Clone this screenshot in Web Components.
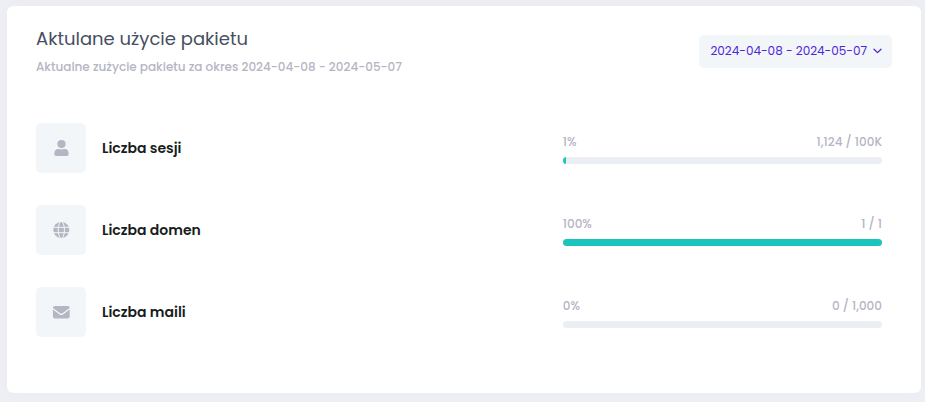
<!DOCTYPE html>
<html lang="pl">
<head>
<meta charset="utf-8">
<meta name="viewport" content="width=device-width, initial-scale=1">
<title>Aktulane użycie pakietu</title>
<style>
body { margin: 0; padding: 6px 4px 9px 7px; background: #eeeef5; font-family: Poppins, Inter, "Noto Sans", sans-serif; color: #181c20; }
</style>
</head>
<body>
<usage-card>
  <span slot="title">Aktulane użycie pakietu</span>
  <span slot="subtitle">Aktualne zużycie pakietu za okres 2024-04-08 - 2024-05-07</span>
  <period-button slot="toolbar">2024-04-08 - 2024-05-07</period-button>
  <usage-row icon="user" percent="1" amount="1,124 / 100K">Liczba sesji</usage-row>
  <usage-row icon="globe" percent="100" amount="1 / 1">Liczba domen</usage-row>
  <usage-row icon="mail" percent="0" amount="0 / 1,000">Liczba maili</usage-row>
</usage-card>
<script>
class UsageCard extends HTMLElement {
  constructor() {
    super();
    this.attachShadow({ mode: 'open' }).innerHTML = `
      <style>
        :host { display: block; box-sizing: border-box; padding: 19px 29px 56px; border-radius: 6px; background: #fff; box-shadow: 0 0 20px rgba(76, 87, 125, .02); }
        header { display: flex; align-items: center; justify-content: space-between; gap: 16px; padding-bottom: 46px; }
        h1 { margin: 0; font-size: 18px; line-height: 27px; font-weight: 400; color: #464e5f; }
        p { margin: 5px 0 0; font-size: 12px; line-height: 20px; font-weight: 500; color: #b5b5c3; }
        section { display: grid; gap: 32px; }
      </style>
      <header>
        <div><h1><slot name="title"></slot></h1><p><slot name="subtitle"></slot></p></div>
        <slot name="toolbar"></slot>
      </header>
      <section><slot></slot></section>`;
  }
}

class PeriodButton extends HTMLElement {
  constructor() {
    super();
    this.attachShadow({ mode: 'open' }).innerHTML = `
      <style>
        :host { display: block; flex: none; padding-top: 1px; }
        button { display: flex; align-items: center; gap: 6px; padding: 6px 10px 7px 11px; border: 0; border-radius: 5px; background: #f3f6f9; color: #4d26db; font: inherit; font-size: 12px; line-height: 20px; cursor: pointer; }
        svg { display: block; }
      </style>
      <button type="button" aria-haspopup="true"><slot></slot>
        <svg width="9" height="6" viewBox="0 0 9 6" fill="none" stroke="currentColor" stroke-width="1.3" stroke-linecap="round" stroke-linejoin="round" aria-hidden="true"><path d="M1 1.200 4.500 4.600 8 1.200"/></svg>
      </button>`;
  }
}

const icons = {
  user: '<circle cx="9.500" cy="5" r="4.100"/><path d="M2.300 15c0-3.500 1.500-5 4-5 1.200 0 1.700.4 3.200.4s2-.4 3.200-.4c2.500 0 4 1.500 4 5 0 1.300-.6 2-1.700 2H4c-1.100 0-1.700-.7-1.700-2z"/>',
  globe: '<circle cx="9.300" cy="9" r="8"/><g fill="none" stroke="#f3f6f9" stroke-width="1"><ellipse cx="9.300" cy="9" rx="3.100" ry="8.400"/><path d="M1 6.300h17M1 11.700h17"/></g>',
  mail: '<path d="M.9 5.100C.9 3.700 1.700 2.900 3 2.900h12.600c1.300 0 2.100.8 2.100 2.200L10.500 10.300c-.8.600-1.600.600-2.400 0z"/><path d="M.9 6.500l6.700 4.900c1.200.9 2.200.9 3.400 0l6.700-4.900v6.800c0 1.300-.8 2.100-2.100 2.100H3c-1.300 0-2.100-.8-2.100-2.100z"/>'
};

class UsageIcon extends HTMLElement {
  connectedCallback() {
    if (this.shadowRoot) return;
    this.attachShadow({ mode: 'open' }).innerHTML = `
      <style>
        :host { display: grid; place-items: center; flex: none; width: 50px; height: 50px; border-radius: 5px; background: #f3f6f9; color: #b5b5c3; }
        svg { display: block; }
      </style>
      <svg width="18" height="18" viewBox="0 0 18 18" fill="currentColor" aria-hidden="true">${icons[this.getAttribute('name')]}</svg>`;
  }
}

class UsageMeter extends HTMLElement {
  connectedCallback() {
    if (this.shadowRoot) return;
    const percent = Number(this.getAttribute('percent'));
    this.attachShadow({ mode: 'open' }).innerHTML = `
      <style>
        :host { display: block; }
        .values { display: flex; justify-content: space-between; font-size: 12px; line-height: 18px; font-weight: 500; color: #b5b5c3; }
        .track { margin-top: 6px; height: 7px; overflow: hidden; border-radius: 4px; background: #ebeef2; }
        .fill { height: 100%; background: #1bc5bd; }
      </style>
      <div class="values"><span>${percent}%</span><span>${this.getAttribute('amount')}</span></div>
      <div class="track" role="progressbar" aria-valuemin="0" aria-valuemax="100" aria-valuenow="${percent}"><div class="fill" style="width:${percent}%"></div></div>`;
  }
}

class UsageRow extends HTMLElement {
  connectedCallback() {
    if (this.shadowRoot) return;
    this.attachShadow({ mode: 'open' }).innerHTML = `
      <style>
        :host { display: grid; grid-template-columns: minmax(0, 8fr) minmax(0, 5fr); align-items: center; }
        .name { display: flex; align-items: center; gap: 16px; }
        h2 { margin: 0; font-size: 14px; line-height: 21px; font-weight: 600; }
        usage-meter { margin-right: 10px; }
      </style>
      <div class="name"><usage-icon name="${this.getAttribute('icon')}"></usage-icon><h2><slot></slot></h2></div>
      <usage-meter percent="${this.getAttribute('percent')}" amount="${this.getAttribute('amount')}"></usage-meter>`;
  }
}

customElements.define('usage-icon', UsageIcon);
customElements.define('usage-meter', UsageMeter);
customElements.define('usage-row', UsageRow);
customElements.define('period-button', PeriodButton);
customElements.define('usage-card', UsageCard);
</script>
</body>
</html>
